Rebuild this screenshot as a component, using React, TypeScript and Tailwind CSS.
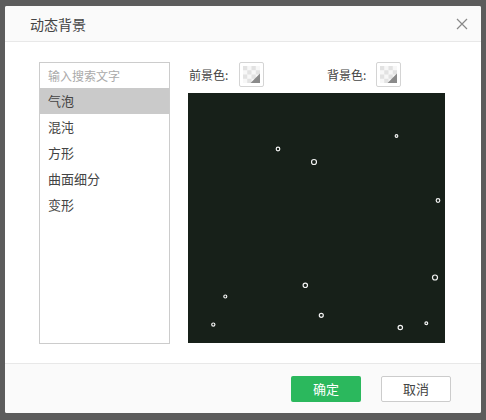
import React from "react";

const bubbles = [
  { x: 278, y: 149, r: 1.8 },
  { x: 314, y: 162, r: 2.5 },
  { x: 396.5, y: 136, r: 1.3 },
  { x: 438, y: 200.5, r: 1.8 },
  { x: 435, y: 277.5, r: 2.5 },
  { x: 305.3, y: 285.3, r: 2.2 },
  { x: 225.3, y: 296.5, r: 1.5 },
  { x: 321.3, y: 315.3, r: 2 },
  { x: 213.3, y: 324.6, r: 1.6 },
  { x: 400.3, y: 327.5, r: 2.2 },
  { x: 426.3, y: 323.3, r: 1.4 },
];

function Swatch() {
  const cells: React.ReactNode[] = [];
  for (let r = 0; r < 4; r++) {
    for (let c = 0; c < 4; c++) {
      if ((r + c) % 2 === 0) {
        cells.push(<rect key={`${r}-${c}`} x={c * 4.5} y={r * 4.5} width={4.5} height={4.5} fill="#e2e2e2" />);
      }
    }
  }
  return (
    <div className="w-[25px] h-[25px] border border-[#d4d4d4] rounded-[2px] bg-white p-[3px]">
      <svg width="17" height="17" viewBox="0 0 18 18">
        <rect width="18" height="18" fill="#f7f7f7" />
        {cells}
        <polygon points="18,8 18,18 8,18" fill="#8a8a8a" />
      </svg>
    </div>
  );
}

export default function App() {
  const items = ["气泡", "混沌", "方形", "曲面细分", "变形"];
  return (
    <div
      className="w-[486px] h-[420px] bg-[#5c5c5c] pt-[6px] pl-[5px]"
      style={{ fontFamily: '"Noto Sans CJK SC", "Noto Sans", sans-serif' }}
    >
      <div className="w-[476px] h-[407px] bg-white flex flex-col rounded-[2px] overflow-hidden">
        <div className="h-[36px] bg-[#fafafa] border-b border-[#e8e8e8] flex items-center justify-between pl-[25px] pr-[13px]">
          <span className="text-[14px] text-[#444] leading-none">动态背景</span>
          <svg width="12" height="12" viewBox="0 0 12 12">
            <path d="M1 1 L11 11 M11 1 L1 11" stroke="#888" strokeWidth="1.2" />
          </svg>
        </div>
        <div className="flex-1 flex pl-[34px] pt-[20px]">
          <div className="w-[131px] h-[282px] border border-[#cccccc] flex flex-col">
            <div className="h-[25px] flex items-center pl-[8px] text-[12px] text-[#aaa]">输入搜索文字</div>
            {items.map((t, i) => (
              <div
                key={t}
                className={`h-[26px] flex items-center pl-[8px] text-[13px] text-[#444] ${i === 0 ? "bg-[#cacaca]" : ""}`}
              >
                {t}
              </div>
            ))}
          </div>
          <div className="ml-[18px] flex flex-col">
            <div className="flex items-center h-[25px]">
              <span className="text-[12px] text-[#444] ml-[1px] w-[50px]">前景色:</span>
              <Swatch />
              <span className="text-[12px] text-[#444] ml-[63px] w-[49px]">背景色:</span>
              <Swatch />
            </div>
            <div className="mt-[6px] w-[257px] h-[250px] bg-[#172019]">
              <svg width="257" height="250">
                {bubbles.map((b, i) => (
                  <circle key={i} cx={b.x - 188} cy={b.y - 93} r={b.r} fill="none" stroke="#f2f2f2" strokeWidth="1.2" />
                ))}
              </svg>
            </div>
          </div>
        </div>
        <div className="h-[50px] bg-[#fafafa] border-t border-[#e8e8e8] flex items-center justify-end pr-[30px] gap-[20px]">
          <button className="w-[70px] h-[26px] bg-[#2bb85d] rounded-[2px] text-white text-[13px]">确定</button>
          <button className="w-[70px] h-[26px] bg-white border border-[#cccccc] rounded-[2px] text-[#444] text-[13px]">取消</button>
        </div>
      </div>
    </div>
  );
}
